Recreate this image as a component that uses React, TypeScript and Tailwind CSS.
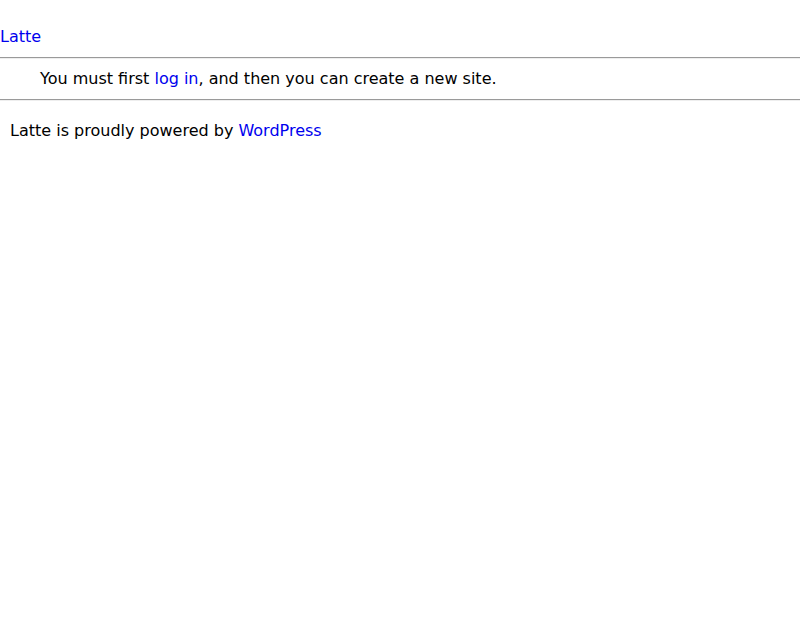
export default function App() {
  return (
    <div className="min-h-[625px] bg-white text-black text-[16px] leading-[24px]" style={{ fontFamily: '"DejaVu Sans", sans-serif' }}>
      <div className="pt-[25px]">
        <a href="#" className="text-[#0000ee]">Latte</a>
      </div>
      <div className="mt-2 border-t border-t-[#9a9a9a] border-b border-b-[#eeeeee]" />
      <div className="py-2 pl-10">
        You must first <a href="#" className="text-[#0000ee]">log in</a>, and then you can create a new site.
      </div>
      <div className="border-t border-t-[#9a9a9a] border-b border-b-[#eeeeee]" />
      <div className="pt-[18px] pl-2.5">
        Latte is proudly powered by <a href="#" className="text-[#0000ee]">WordPress</a>
      </div>
    </div>
  );
}
